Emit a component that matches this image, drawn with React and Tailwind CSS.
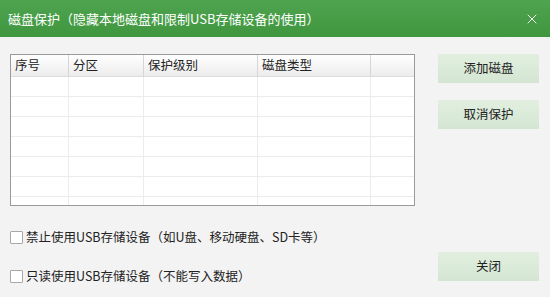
import { X } from "lucide-react";

const font = {
  fontFamily: '"Noto Sans CJK SC", "Noto Sans", sans-serif',
};

const columns = ["序号", "分区", "保护级别", "磁盘类型", ""];
const widths = ["w-[58px]", "w-[75px]", "w-[114px]", "w-[113px]", "flex-1"];

function Checkbox({ label }) {
  return (
    <label className="flex items-center gap-[3px] h-[18px] text-[12.5px] text-[#222]">
      <span className="w-[13px] h-[13px] border border-[#a8a8a8] bg-white rounded-[1px]" />
      <span>{label}</span>
    </label>
  );
}

function Button({ children }) {
  return (
    <button className="w-[101px] h-[29px] bg-gradient-to-b from-[#e2efe0] to-[#d3e6d2] text-[12.5px] text-[#222]">
      {children}
    </button>
  );
}

export default function App() {
  return (
    <div className="w-[550px] h-[297px] bg-[#f3f3f3] flex flex-col" style={font}>
      <div className="h-[37px] bg-gradient-to-b from-[#4fa54f] to-[#3f963f] flex items-center justify-between pl-[8px] pr-[10px] text-white">
        <span className="text-[13px]">磁盘保护（隐藏本地磁盘和限制USB存储设备的使用）</span>
        <X size={16} strokeWidth={1.4} />
      </div>

      <div className="flex flex-1 pt-[17px] pl-[10px] pr-[11px]">
        <div className="flex flex-col w-[405px]">
          <div className="h-[152px] border border-[#9a9a9a] bg-white overflow-hidden">
            <div className="flex h-[22px] bg-gradient-to-b from-white to-[#ececec] border-b border-[#dcdcdc]">
              {columns.map((c, i) => (
                <div
                  key={i}
                  className={`${widths[i]} flex items-center pl-[4px] text-[12.5px] text-[#222] ${i < 4 ? "border-r border-[#d6d6d6]" : ""}`}
                >
                  {c}
                </div>
              ))}
            </div>
            {[0, 1, 2, 3, 4, 5, 6].map((r) => (
              <div key={r} className="flex h-[20px] border-b border-[#ececec]">
                {widths.map((w, i) => (
                  <div key={i} className={`${w} ${i < 4 ? "border-r border-[#ececec]" : ""}`} />
                ))}
              </div>
            ))}
          </div>

          <div className="flex flex-col gap-[21px] mt-[22px]">
            <Checkbox label="禁止使用USB存储设备（如U盘、移动硬盘、SD卡等）" />
            <Checkbox label="只读使用USB存储设备（不能写入数据）" />
          </div>
        </div>

        <div className="flex flex-col ml-auto">
          <Button>添加磁盘</Button>
          <div className="mt-[17px]">
            <Button>取消保护</Button>
          </div>
          <div className="mt-auto mb-[16px]">
            <Button>关闭</Button>
          </div>
        </div>
      </div>
    </div>
  );
}
